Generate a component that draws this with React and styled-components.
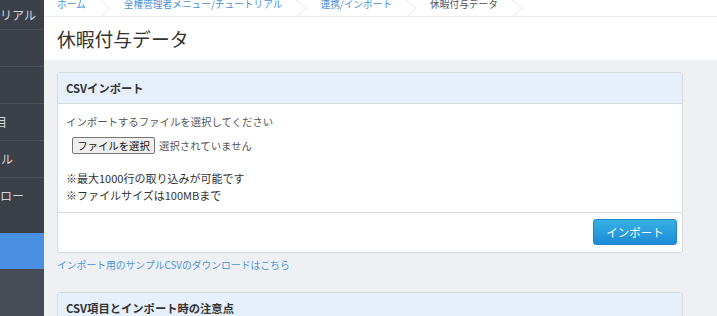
import React from 'react'
import styled, { createGlobalStyle } from 'styled-components'

const Global = createGlobalStyle`
  html, body { margin: 0; padding: 0; }
  body {
    font-family: "Noto Sans CJK JP", "Noto Sans", sans-serif;
    background: #eef0f4;
    overflow: hidden;
  }
`

const Page = styled.div`
  display: flex;
  width: 717px;
  height: 316px;
  overflow: hidden;
`

const Sidebar = styled.div`
  width: 44px;
  flex: none;
  display: flex;
  flex-direction: column;
  background: #3b4049;
  overflow: hidden;
`

const NavItem = styled.div`
  width: 44px;
  height: ${p => p.h}px;
  flex: none;
  display: flex;
  align-items: ${p => (p.top ? 'flex-start' : 'center')};
  padding-top: ${p => (p.top ? 10 : 0)}px;
  justify-content: flex-end;
  overflow: hidden;
  box-sizing: border-box;
  border-bottom: 1px solid ${p => (p.line ? '#4b515b' : 'transparent')};
  background: ${p => (p.active ? '#4a90e2' : 'transparent')};
`

const NavLabel = styled.span`
  flex: none;
  white-space: nowrap;
  margin-right: ${p => p.mr}px;
  color: #d3d7de;
  font-size: 12px;
  line-height: 16px;
`

const NavRest = styled.div`
  flex: 1;
  background: #464b55;
`

const Main = styled.div`
  flex: 1;
  display: flex;
  flex-direction: column;
  min-width: 0;
`

const Head = styled.div`
  background: #fff;
  height: 60px;
  flex: none;
`

const Crumbs = styled.div`
  height: 17px;
  display: flex;
  align-items: flex-start;
  border-bottom: 1px solid #e9ebee;
  box-sizing: border-box;
  padding-left: 13px;
  overflow: hidden;
`

const Crumb = styled.span`
  font-size: 9.7px;
  line-height: 12px;
  margin-top: -2px;
  color: ${p => (p.current ? '#555' : '#4a90d9')};
  white-space: nowrap;
`

const Chevron = styled.svg`
  width: 14px;
  height: 17px;
  margin: 0 12px;
  flex: none;
`

const Title = styled.h1`
  margin: 0;
  padding: 8px 0 0 13px;
  font-size: 18.8px;
  font-weight: 400;
  line-height: 28px;
  color: #333;
`

const Content = styled.div`
  padding: 12px 34px 0 13px;
  display: flex;
  flex-direction: column;
`

const Card = styled.div`
  background: #fff;
  border: 1px solid #d6d9de;
  border-radius: 3px;
  overflow: hidden;
`

const CardHead = styled.div`
  height: 30px;
  background: #e6f0fc;
  border-bottom: 1px solid #d6d9de;
  display: flex;
  align-items: center;
  padding-left: 8px;
  font-size: 11.3px;
  font-weight: 700;
  color: #333;
`

const CardBody = styled.div`
  padding: 10px 8px 8px 8px;
`

const Hint = styled.p`
  margin: 0;
  font-size: 10.4px;
  line-height: 16px;
  color: #555;
`

const FileRow = styled.div`
  display: flex;
  align-items: center;
  gap: 4px;
  margin: 7px 0 0 6px;
`

const FileButton = styled.button`
  width: 83px;
  height: 17px;
  padding: 0;
  font-family: inherit;
  font-size: 10.4px;
  line-height: 15px;
  color: #111;
  background: #efefef;
  border: 1px solid #767676;
  border-radius: 2px;
`

const FileName = styled.span`
  font-size: 10.4px;
  color: #555;
`

const Notes = styled.div`
  margin-top: 16px;
  font-size: 11px;
  line-height: 17px;
  color: #333;
`

const CardFoot = styled.div`
  border-top: 1px solid #d6d9de;
  display: flex;
  justify-content: flex-end;
  padding: 6px 5px 7px;
`

const PrimaryButton = styled.button`
  width: 84px;
  height: 26px;
  font-family: inherit;
  font-size: 11.5px;
  color: #fff;
  background: linear-gradient(#37b0e4, #1d8bd6);
  border: 1px solid #1c86cf;
  border-radius: 3px;
`

const SampleLink = styled.a`
  margin-top: 4px;
  font-size: 9.8px;
  line-height: 16px;
  color: #4f96d8;
  text-decoration: none;
`

const Gap = styled.div`
  height: ${p => p.h}px;
`

const crumbs = ['ホーム', '全権管理者メニュー/チュートリアル', '連携/インポート', '休暇付与データ']

const nav = [
  { label: 'チュートリアル', h: 30, mr: 8, line: true },
  { label: '', h: 37, mr: 8, line: true },
  { label: '', h: 37, mr: 8, line: true },
  { label: '項目', h: 37, mr: 37, line: true },
  { label: 'ツール', h: 37, mr: 31, line: true },
  { label: 'ワークフロー', h: 55, mr: 20, top: true },
  { label: '', h: 36, mr: 8, active: true },
]

function Sep() {
  return (
    <Chevron viewBox="0 0 14 17">
      <polyline points="1,-1 12,8.5 1,18" fill="none" stroke="#e6e8eb" strokeWidth="1" />
    </Chevron>
  )
}

export default function App() {
  return (
    <Page>
      <Global />
      <Sidebar>
        {nav.map((n, i) => (
          <NavItem key={i} h={n.h} line={n.line} top={n.top} active={n.active}>
            <NavLabel mr={n.mr}>{n.label}</NavLabel>
          </NavItem>
        ))}
        <NavRest />
      </Sidebar>
      <Main>
        <Head>
          <Crumbs>
            {crumbs.map((c, i) => (
              <React.Fragment key={c}>
                <Crumb current={i === crumbs.length - 1}>{c}</Crumb>
                <Sep />
              </React.Fragment>
            ))}
          </Crumbs>
          <Title>休暇付与データ</Title>
        </Head>
        <Content>
          <Card>
            <CardHead>CSVインポート</CardHead>
            <CardBody>
              <Hint>インポートするファイルを選択してください</Hint>
              <FileRow>
                <FileButton>ファイルを選択</FileButton>
                <FileName>選択されていません</FileName>
              </FileRow>
              <Notes>
                <div>※最大1000行の取り込みが可能です</div>
                <div>※ファイルサイズは100MBまで</div>
              </Notes>
            </CardBody>
            <CardFoot>
              <PrimaryButton>インポート</PrimaryButton>
            </CardFoot>
          </Card>
          <SampleLink href="#">インポート用のサンプルCSVのダウンロードはこちら</SampleLink>
          <Gap h={19} />
          <Card>
            <CardHead>CSV項目とインポート時の注意点</CardHead>
            <CardBody />
          </Card>
        </Content>
      </Main>
    </Page>
  )
}
